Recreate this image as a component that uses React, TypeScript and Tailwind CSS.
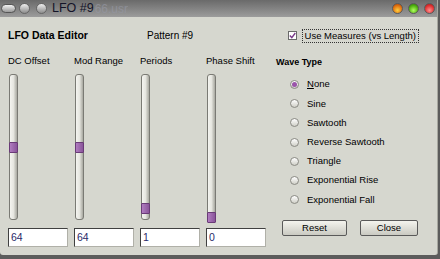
import React from "react";

const font = { fontFamily: '"Liberation Sans", Arial, sans-serif' };

const sliders = [
  { label: "DC Offset", value: "64", thumbTop: 67, trackH: 146 },
  { label: "Mod Range", value: "64", thumbTop: 67, trackH: 146 },
  { label: "Periods", value: "1", thumbTop: 128, trackH: 146 },
  { label: "Phase Shift", value: "0", thumbTop: 137, trackH: 148 },
];

const waves = [
  "None",
  "Sine",
  "Sawtooth",
  "Reverse Sawtooth",
  "Triangle",
  "Exponential Rise",
  "Exponential Fall",
];

const Dot = ({ c }: { c: string }) => (
  <div
    className="w-[11px] h-[11px] rounded-full border border-[#5a5a5a]"
    style={{ background: c }}
  />
);

const App = () => {
  return (
    <div
      className="w-[440px] h-[259px] bg-[#5c5c5c] flex flex-col overflow-hidden"
      style={font}
    >
      <div className="w-[438px] h-[255px] bg-[#d6d7cf] flex flex-col rounded-b-[3px] border-r border-[#a8a8a0]">
        {/* title bar */}
        <div className="h-[17px] bg-gradient-to-b from-[#6a6a6a] to-[#9c9c9c] flex items-center pl-[1px] pr-[1px]">
          <div className="w-[15px] h-[9px] rounded-full bg-gradient-to-b from-[#f2f2f2] to-[#9a9a9a] border border-[#555]" />
          <div className="ml-[3px] w-[11px] h-[11px] rounded-full bg-gradient-to-b from-[#eeeeee] to-[#8e8e8e] border border-[#666]" />
          <div className="ml-[6px] w-[11px] h-[11px] rounded-full bg-gradient-to-b from-[#eeeeee] to-[#8e8e8e] border border-[#666]" />
          <span className="ml-[5px] text-[12.5px] text-[#141428] leading-none">LFO #9</span>
          <span className="ml-[1px] text-[12px] text-[#9597a2] leading-none opacity-70">66.usr</span>
          <div className="flex-1" />
          <div className="flex gap-[5px] mr-[1px]">
            <Dot c="radial-gradient(circle at 50% 70%, #ffd040, #e07010 60%, #a04008)" />
            <Dot c="radial-gradient(circle at 50% 70%, #b0ff60, #50b010 60%, #2a7008)" />
            <Dot c="radial-gradient(circle at 50% 70%, #ff9090, #e03030 60%, #a01818)" />
          </div>
        </div>

        {/* header row */}
        <div className="h-[35px] flex items-center pl-[8px] pt-[2px]">
          <span className="w-[139px] text-[10.5px] font-bold text-black">LFO Data Editor</span>
          <span className="text-[10px] text-black">Pattern #9</span>
          <div className="flex-1" />
          <div className="flex items-center mr-[18px]">
            <div className="w-[9px] h-[9px] bg-white border border-[#6a6a6a] flex items-center justify-center mr-[5px]">
              <svg width="7" height="7" viewBox="0 0 7 7">
                <path d="M0.8 3.5 L2.8 5.6 L6.3 1" stroke="#7a3a8a" strokeWidth="1.4" fill="none" />
              </svg>
            </div>
            <span className="text-[9.5px] text-black border border-dotted border-[#333] px-[2px] leading-[12px]">
              Use Measures (vs Length)
            </span>
          </div>
        </div>

        {/* main */}
        <div className="flex pl-[8px] pt-[2px]">
          <div className="flex gap-[1px]">
            {sliders.map((s) => (
              <div key={s.label} className="w-[65px] flex flex-col">
                <span className="text-[9.5px] text-black h-[14px] leading-[14px]">{s.label}</span>
                <div className="h-[160px] pt-[6px] pl-[1px]">
                  <div
                    className="relative w-[9px] rounded-[3px] border border-[#7a7a74] bg-gradient-to-r from-[#f4f4f0] via-[#e6e6e0] to-[#a8a8a0]"
                    style={{ height: s.trackH }}
                  >
                    <div
                      className="absolute left-[-1px] w-[9px] h-[11px] rounded-[1px] border border-[#6a3a78] bg-gradient-to-r from-[#b07cc0] to-[#8a559a]"
                      style={{ top: s.thumbTop }}
                    />
                  </div>
                </div>
                <div className="w-[60px] h-[19px] bg-white border border-[#404040] border-b-[#b0b0a8] border-r-[#b0b0a8] flex items-center pl-[2px] text-[10.5px] text-[#2a2a6a]">
                  {s.value}
                </div>
              </div>
            ))}
          </div>

          <div className="ml-[5px] flex flex-col flex-1">
            <span className="text-[9px] font-bold text-black h-[14px] leading-[14px] pt-[1px]">Wave Type</span>
            <div className="flex flex-col gap-[6px] pl-[14px] pt-[10px]">
              {waves.map((w, i) => (
                <div key={w} className="flex items-center h-[13.2px]">
                  <div className="w-[9px] h-[9px] rounded-full border border-[#8a8a84] bg-gradient-to-b from-[#ffffff] to-[#d0d0c8] flex items-center justify-center">
                    {i === 0 && <div className="w-[5px] h-[5px] rounded-full bg-[#9a55aa]" />}
                  </div>
                  <span className="ml-[8px] text-[9.5px] text-black">
                    {i === 0 ? (
                      <>
                        <span className="underline">N</span>one
                      </>
                    ) : (
                      w
                    )}
                  </span>
                </div>
              ))}
            </div>
            <div className="flex-1" />
            <div className="flex gap-[13px] pl-[6px] mb-[11px]">
              <button className="w-[65px] h-[16px] rounded-[2px] border border-[#5a5a5a] bg-gradient-to-b from-[#f4f4ee] to-[#cacac2] text-[9.5px] text-black leading-none">
                Reset
              </button>
              <button className="w-[58px] h-[16px] rounded-[2px] border border-[#5a5a5a] bg-gradient-to-b from-[#f4f4ee] to-[#cacac2] text-[9.5px] text-black leading-none">
                Close
              </button>
            </div>
          </div>
        </div>
      </div>
    </div>
  );
};

export default App;
